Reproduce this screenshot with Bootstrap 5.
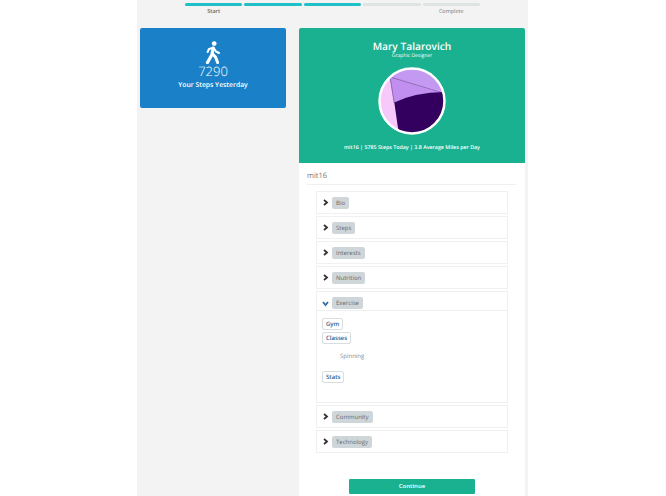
<!DOCTYPE html>
<html lang="en">
<head>
	<meta charset="UTF-8" />
	<meta name="viewport" content="width=device-width, initial-scale=1.0" />
	<title>Profile</title>
	<link href="https://cdn.jsdelivr.net/npm/bootstrap@5.3.3/dist/css/bootstrap.min.css" rel="stylesheet" />

	<style>
		html, body {
			height: 496px;
			overflow: hidden;
		}

		body {
			background-color: #fff;
			font-family: "Open Sans", sans-serif;
			color: #666;
			text-rendering: geometricPrecision;
		}

		.page-shell {
			width: 391px;
			height: 496px;
			margin-left: 137px;
			background-color: #f3f3f3;
			overflow: hidden;
			opacity: .999;
		}

		.steps-wrap {
			width: 295px;
			margin-left: 48px;
			padding-top: 3px;
			height: 28px;
			gap: 2px;
		}

		.step-item {
			width: 57.4px;
			font-size: 5.5px;
			line-height: 8px;
			text-align: center;
			color: #777;
		}

		.step-bar {
			height: 3px;
			border-radius: 2px;
			background-color: #dfe3e3;
			margin-bottom: 1px;
		}

		.step-bar.done {
			background-color: #1fc0c8;
		}

		.step-label-start {
			font-weight: 600;
			color: #666;
		}

		.panels {
			padding-left: 3px;
			gap: 13px;
		}

		.steps-card {
			width: 146px;
			height: 80px;
			background-color: #1a80c8;
			border-radius: 2px;
			color: #fff;
			text-align: center;
			padding-top: 13px;
		}

		.steps-count {
			font-size: 13px;
			font-weight: 300;
			line-height: 15px;
		}

		.steps-caption {
			font-size: 6.8px;
			font-weight: 600;
			line-height: 11px;
		}

		.main-col {
			width: 226px;
		}

		.profile-head {
			height: 135px;
			background-color: #1ab190;
			color: #fff;
			text-align: center;
			border-radius: 2px 2px 0 0;
			padding-top: 12px;
		}

		.profile-name {
			font-size: 10.2px;
			font-weight: 600;
			line-height: 12px;
			margin: 0 0 1px;
		}

		.profile-role {
			font-size: 5px;
			line-height: 7px;
		}

		.avatar {
			display: block;
			width: 68px;
			height: 68px;
			margin: 7px auto 8px;
		}

		.profile-stats {
			font-size: 5.3px;
			font-weight: 600;
			line-height: 8px;
			margin-top: 1px;
		}

		.profile-body {
			background-color: #fff;
			height: 333px;
			padding: 8px 8px 0;
		}

		.user-title {
			font-size: 7.5px;
			line-height: 10px;
			color: #777;
			padding-bottom: 3px;
			border-bottom: 1px solid #f0f0f0;
			margin-right: 1px;
			margin-bottom: 6px;
		}

		.acc-list {
			margin-left: 9px;
			width: 192px;
		}

		.acc-row {
			height: 23px;
			border: 1px solid #f0f0f0;
			margin-bottom: 2px;
			padding-left: 5px;
			gap: 3px;
		}

		.acc-row.open {
			height: 19px;
			margin-bottom: 0;
			padding-top: 4px;
			border-bottom: 0;
		}

		.chev {
			width: 7px;
			height: 7px;
			flex: none;
		}

		.acc-tag {
			background-color: #cfd6da;
			color: #666;
			font-size: 6px;
			line-height: 12px;
			padding: 0 4px;
			border-radius: 2px;
		}

		.acc-panel {
			height: 93px;
			border: 1px solid #f0f0f0;
			margin-bottom: 2px;
			padding: 7px 5px 0;
		}

		.sub-tag {
			display: table;
			border: 1px solid #d8dde0;
			border-radius: 2px;
			color: #2d6290;
			font-size: 6px;
			font-weight: 600;
			line-height: 10px;
			padding: 0 3px;
			margin-bottom: 2px;
		}

		.sub-text {
			font-size: 6px;
			line-height: 8px;
			color: #888;
			padding: 6px 0 11px 18px;
		}

		.btn-continue {
			display: block;
			width: 126px;
			height: 15px;
			margin: 26px 0 0 42px;
			padding: 0;
			background-color: #1ab190;
			border: 0;
			border-radius: 1px;
			color: #fff;
			font-size: 6px;
			font-weight: 600;
			line-height: 15px;
		}
	</style>
</head>
<body>

	<div class="page-shell">

		<div class="steps-wrap d-flex">
			<div class="step-item"><div class="step-bar done"></div><span class="step-label-start">Start</span></div>
			<div class="step-item"><div class="step-bar done"></div></div>
			<div class="step-item"><div class="step-bar done"></div></div>
			<div class="step-item"><div class="step-bar"></div></div>
			<div class="step-item"><div class="step-bar"></div>Complete</div>
		</div>

		<div class="panels d-flex align-items-start">

			<div class="steps-card">
				<svg width="16" height="23" viewBox="0 0 16 23" class="d-block mx-auto">
					<circle cx="9.2" cy="2.6" r="2.4" fill="#fff"/>
					<path d="M8 7 L7 13.5 L2.5 21.5" fill="none" stroke="#fff" stroke-width="3.2" stroke-linecap="round" stroke-linejoin="round"/>
					<path d="M7.6 13 L10.5 16 L12.6 21.5" fill="none" stroke="#fff" stroke-width="3" stroke-linecap="round" stroke-linejoin="round"/>
					<path d="M2.6 11 L4 8 L8.5 6.6 L11 10.5 L14 12" fill="none" stroke="#fff" stroke-width="2" stroke-linecap="round" stroke-linejoin="round"/>
				</svg>
				<div class="steps-count">7290</div>
				<div class="steps-caption">Your Steps Yesterday</div>
			</div>

			<div class="main-col">
				<div class="profile-head">
					<h1 class="profile-name">Mary Talarovich</h1>
					<div class="profile-role">Graphic Designer</div>
					<svg class="avatar" viewBox="0 0 68 68">
						<defs>
							<clipPath id="avatarClip"><circle cx="34" cy="34" r="32"/></clipPath>
						</defs>
						<g clip-path="url(#avatarClip)">
							<rect width="68" height="68" fill="#f7c8fa"/>
							<path d="M12 10 L20 -2 L70 -2 L70 26 Z" fill="#c499f2"/>
							<path d="M12 10 L66 26 L66 30 Q40 26 16 36 Z" fill="#c08ff0"/>
							<path d="M12 10 L66 26" stroke="#8f68b8" stroke-width="1" fill="none"/>
							<path d="M12 10 L16.3 36" stroke="#8f68b8" stroke-width="1" fill="none"/>
							<path d="M16.3 35.5 Q38 25 68 25 L68 68 L21 68 Z" fill="#33005f"/>
						</g>
						<circle cx="34" cy="34" r="32.5" fill="none" stroke="#fff" stroke-width="2.5"/>
					</svg>
					<div class="profile-stats">mit16 | 5785 Steps Today | 3.8 Average Miles per Day</div>
				</div>

				<div class="profile-body">
					<div class="user-title">mit16</div>
					<div class="acc-list">
						<div class="acc-row d-flex align-items-center">
							<svg class="chev" viewBox="0 0 7 7"><path d="M2 1 L5 3.5 L2 6" fill="none" stroke="#333" stroke-width="1.8"/></svg>
							<span class="acc-tag">Bio</span>
						</div>
						<div class="acc-row d-flex align-items-center">
							<svg class="chev" viewBox="0 0 7 7"><path d="M2 1 L5 3.5 L2 6" fill="none" stroke="#333" stroke-width="1.8"/></svg>
							<span class="acc-tag">Steps</span>
						</div>
						<div class="acc-row d-flex align-items-center">
							<svg class="chev" viewBox="0 0 7 7"><path d="M2 1 L5 3.5 L2 6" fill="none" stroke="#333" stroke-width="1.8"/></svg>
							<span class="acc-tag">Interests</span>
						</div>
						<div class="acc-row d-flex align-items-center">
							<svg class="chev" viewBox="0 0 7 7"><path d="M2 1 L5 3.5 L2 6" fill="none" stroke="#333" stroke-width="1.8"/></svg>
							<span class="acc-tag">Nutrition</span>
						</div>
						<div class="acc-row open d-flex align-items-center">
							<svg class="chev" viewBox="0 0 7 7"><path d="M1 2 L3.5 5 L6 2" fill="none" stroke="#2d6fa5" stroke-width="1.8"/></svg>
							<span class="acc-tag">Exercise</span>
						</div>
						<div class="acc-panel">
							<span class="sub-tag">Gym</span>
							<span class="sub-tag">Classes</span>
							<div class="sub-text">Spinning</div>
							<span class="sub-tag">Stats</span>
						</div>
						<div class="acc-row d-flex align-items-center">
							<svg class="chev" viewBox="0 0 7 7"><path d="M2 1 L5 3.5 L2 6" fill="none" stroke="#333" stroke-width="1.8"/></svg>
							<span class="acc-tag">Community</span>
						</div>
						<div class="acc-row d-flex align-items-center">
							<svg class="chev" viewBox="0 0 7 7"><path d="M2 1 L5 3.5 L2 6" fill="none" stroke="#333" stroke-width="1.8"/></svg>
							<span class="acc-tag">Technology</span>
						</div>
					</div>
					<button class="btn btn-continue" type="button">Continue</button>
				</div>
			</div>

		</div>
	</div>

	<script src="https://cdn.jsdelivr.net/npm/bootstrap@5.3.3/dist/js/bootstrap.bundle.min.js"></script>
</body>
</html>
